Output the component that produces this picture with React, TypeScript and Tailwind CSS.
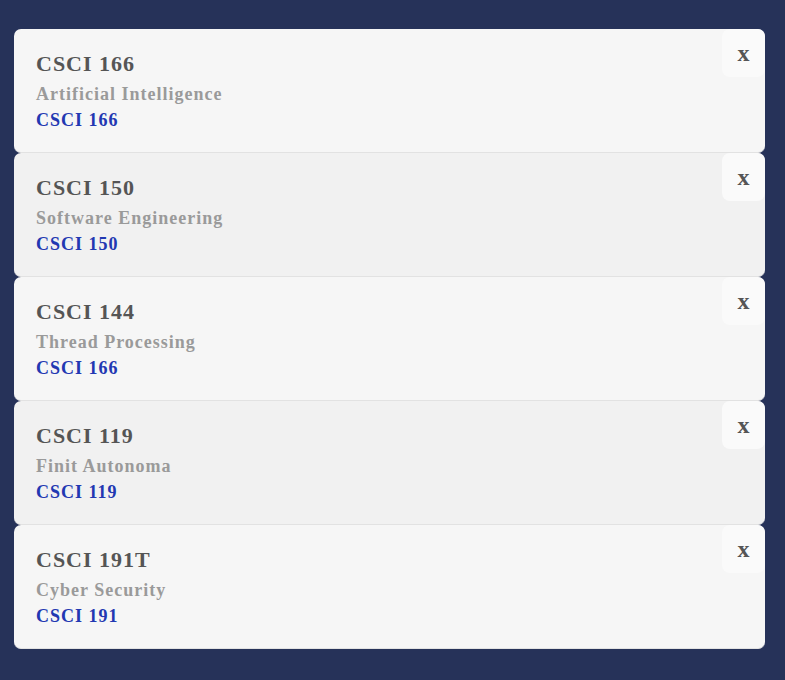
import React from "react";

const courses = [
  { code: "CSCI 166", name: "Artificial Intelligence", link: "CSCI 166" },
  { code: "CSCI 150", name: "Software Engineering", link: "CSCI 150" },
  { code: "CSCI 144", name: "Thread Processing", link: "CSCI 166" },
  { code: "CSCI 119", name: "Finit Autonoma", link: "CSCI 119" },
  { code: "CSCI 191T", name: "Cyber Security", link: "CSCI 191" },
];

export default function App() {
  return (
    <div
      className="min-h-[680px] w-full bg-[#263259] pt-[29px] pl-[14px] pr-[20px]"
      style={{ fontFamily: '"Liberation Serif", "Times New Roman", serif' }}
    >
      <div className="flex flex-col">
        {courses.map((c, i) => (
          <div
            key={i}
            className={`relative rounded-[7px] border-b border-[#e2e2e2] pl-[22px] pt-[20px] pb-[18px] tracking-[1px] ${
              i % 2 === 1 ? "bg-[#f1f1f1]" : "bg-[#f6f6f6]"
            }`}
          >
            <div className="text-[22px] leading-[30px] font-bold text-[#555555]">{c.code}</div>
            <div className="mt-[2px] text-[18px] leading-[27px] font-bold text-[#9a9a9a]">{c.name}</div>
            <div className="-mt-[1px] text-[18px] leading-[27px] font-bold text-[#2238b2]">{c.link}</div>
            <button className="absolute top-0 right-0 flex h-[48px] w-[43px] items-center justify-center rounded-[8px] bg-[#fafafa] text-[24px] leading-none font-bold tracking-normal text-[#555555]">
              x
            </button>
          </div>
        ))}
      </div>
    </div>
  );
}
